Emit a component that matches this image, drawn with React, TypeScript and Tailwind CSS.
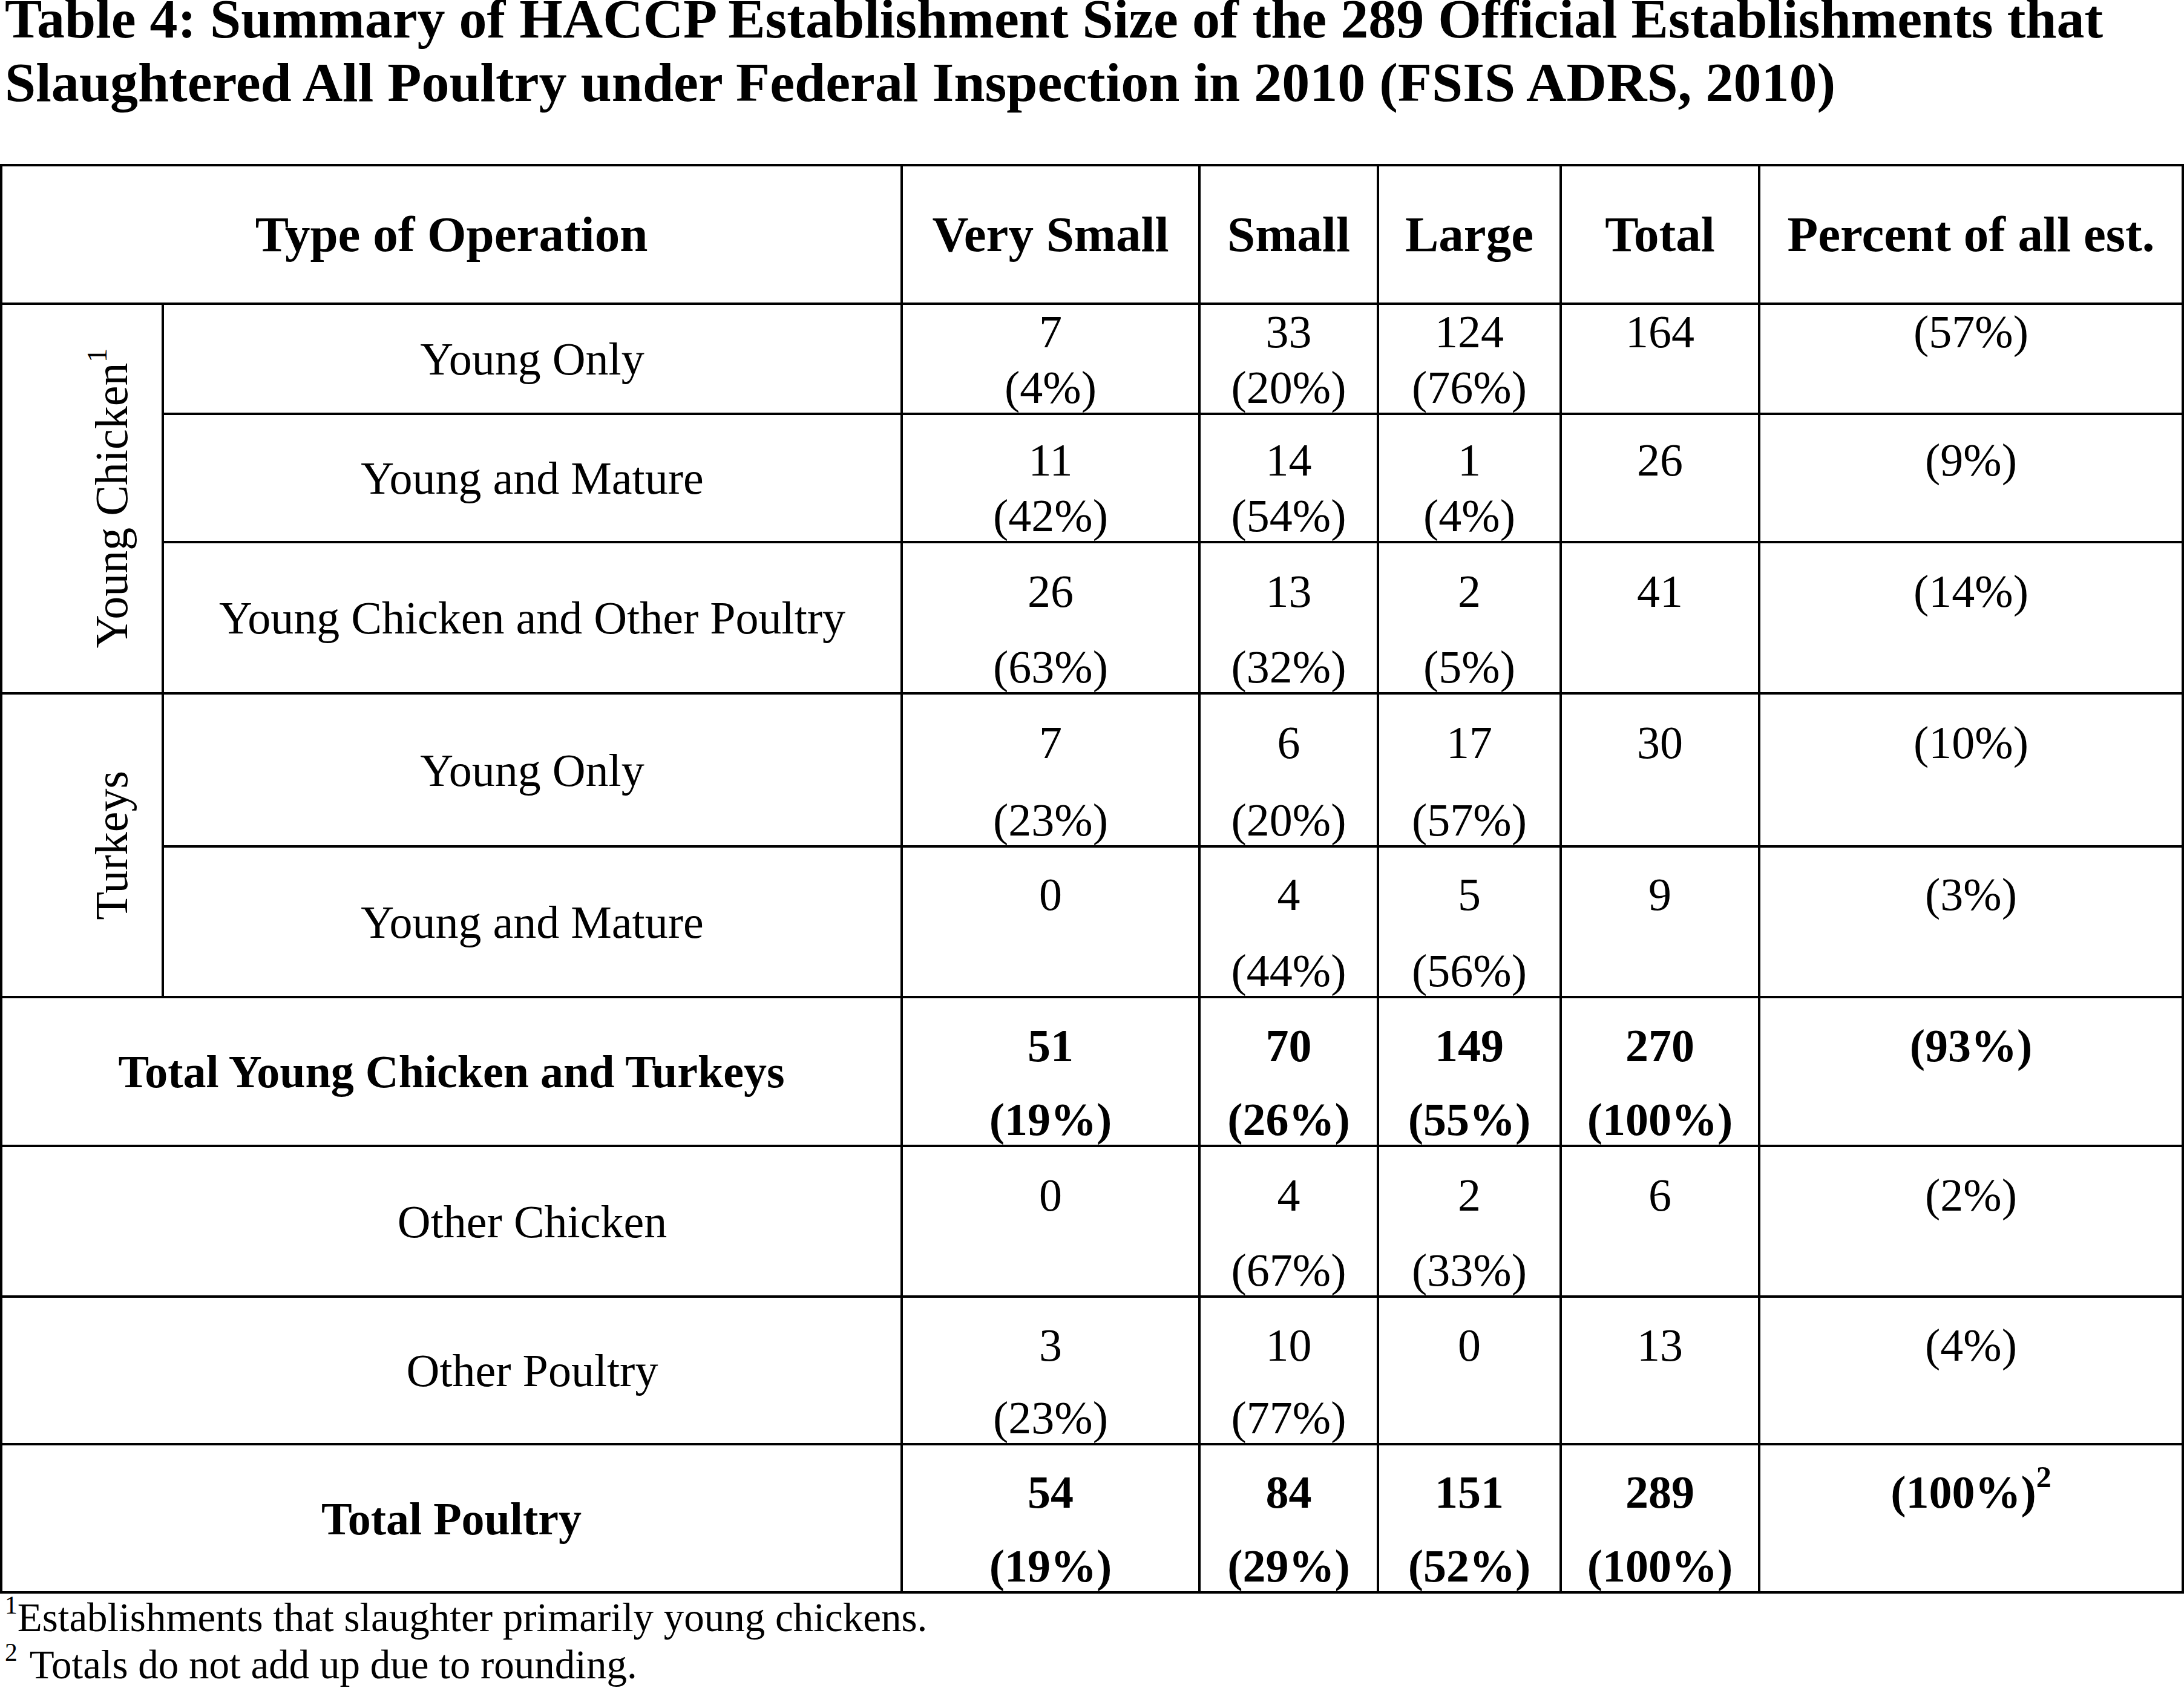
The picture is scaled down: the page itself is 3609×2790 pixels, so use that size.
import React from "react";

type Row = {
  label: string;
  kind: "inner" | "total" | "offset";
  h: string;
  pt: string;
  gap: string;
  vs: string[];
  s: string[];
  l: string[];
  t: string[];
  p: React.ReactNode;
  group?: { name: string; sup?: string; rows: number };
};

const rows: Row[] = [
  {
    label: "Young Only",
    kind: "inner",
    h: "h-[182px]",
    pt: "pt-[2px]",
    gap: "mt-[8px]",
    vs: ["7", "(4%)"],
    s: ["33", "(20%)"],
    l: ["124", "(76%)"],
    t: ["164"],
    p: "(57%)",
    group: { name: "Young Chicken", sup: "1", rows: 3 },
  },
  {
    label: "Young and Mature",
    kind: "inner",
    h: "h-[212px]",
    pt: "pt-[32px]",
    gap: "mt-[8px]",
    vs: ["11", "(42%)"],
    s: ["14", "(54%)"],
    l: ["1", "(4%)"],
    t: ["26"],
    p: "(9%)",
  },
  {
    label: "Young Chicken and Other Poultry",
    kind: "inner",
    h: "h-[250px]",
    pt: "pt-[37px]",
    gap: "mt-[41px]",
    vs: ["26", "(63%)"],
    s: ["13", "(32%)"],
    l: ["2", "(5%)"],
    t: ["41"],
    p: "(14%)",
  },
  {
    label: "Young Only",
    kind: "inner",
    h: "h-[253px]",
    pt: "pt-[37px]",
    gap: "mt-[44px]",
    vs: ["7", "(23%)"],
    s: ["6", "(20%)"],
    l: ["17", "(57%)"],
    t: ["30"],
    p: "(10%)",
    group: { name: "Turkeys", rows: 2 },
  },
  {
    label: "Young and Mature",
    kind: "inner",
    h: "h-[249px]",
    pt: "pt-[35px]",
    gap: "mt-[42px]",
    vs: ["0"],
    s: ["4", "(44%)"],
    l: ["5", "(56%)"],
    t: ["9"],
    p: "(3%)",
  },
  {
    label: "Total Young Chicken and Turkeys",
    kind: "total",
    h: "h-[246px]",
    pt: "pt-[36px]",
    gap: "mt-[38px]",
    vs: ["51", "(19%)"],
    s: ["70", "(26%)"],
    l: ["149", "(55%)"],
    t: ["270", "(100%)"],
    p: "(93%)",
  },
  {
    label: "Other Chicken",
    kind: "offset",
    h: "h-[249px]",
    pt: "pt-[37px]",
    gap: "mt-[40px]",
    vs: ["0"],
    s: ["4", "(67%)"],
    l: ["2", "(33%)"],
    t: ["6"],
    p: "(2%)",
  },
  {
    label: "Other Poultry",
    kind: "offset",
    h: "h-[244px]",
    pt: "pt-[36px]",
    gap: "mt-[36px]",
    vs: ["3", "(23%)"],
    s: ["10", "(77%)"],
    l: ["0"],
    t: ["13"],
    p: "(4%)",
  },
  {
    label: "Total Poultry",
    kind: "total",
    h: "h-[245px]",
    pt: "pt-[35px]",
    gap: "mt-[38px]",
    vs: ["54", "(19%)"],
    s: ["84", "(29%)"],
    l: ["151", "(52%)"],
    t: ["289", "(100%)"],
    p: (
      <>
        (100%)<sup className="text-[0.66em] top-[-0.68em]">2</sup>
      </>
    ),
  },
];

const cell = "border-4 border-black p-0";

function NumCell({ lines, row }: { lines: React.ReactNode[]; row: Row }) {
  return (
    <td className={`${cell} align-top text-center`}>
      <div className={row.pt}>
        {lines.map((x, i) => (
          <div key={i} className={`leading-[84px] ${i > 0 ? row.gap : ""}`}>
            {x}
          </div>
        ))}
      </div>
    </td>
  );
}

export default function App() {
  return (
    <div className="min-h-screen w-[3609px] overflow-hidden bg-white text-black font-['Liberation_Serif','Times_New_Roman',serif]">
      <h1 className="-mt-[21px] pl-[8px] text-[92px] font-bold leading-[105px] whitespace-nowrap">
        Table 4: Summary of HACCP Establishment Size of the 289 Official Establishments that
        <br />
        Slaughtered All Poultry under Federal Inspection in 2010 (FSIS ADRS, 2010)
      </h1>

      <table className="mt-[82px] w-[3609px] table-fixed border-collapse text-[76px] whitespace-nowrap">
        <colgroup>
          <col className="w-[267px]" />
          <col className="w-[1221px]" />
          <col className="w-[492px]" />
          <col className="w-[295px]" />
          <col className="w-[302px]" />
          <col className="w-[328px]" />
          <col className="w-[700px]" />
        </colgroup>
        <thead>
          <tr className="h-[229px] text-[83px] font-bold">
            <th colSpan={2} className={`${cell} align-middle text-center`}>
              Type of Operation
            </th>
            <th className={`${cell} align-middle text-center`}>Very Small</th>
            <th className={`${cell} align-middle text-center`}>Small</th>
            <th className={`${cell} align-middle text-center`}>Large</th>
            <th className={`${cell} align-middle text-center`}>Total</th>
            <th className={`${cell} align-middle text-center`}>Percent of all est.</th>
          </tr>
        </thead>
        <tbody>
          {rows.map((row, i) => (
            <tr key={i} className={`${row.h} ${row.kind === "total" ? "font-bold" : ""}`}>
              {row.group && (
                <td rowSpan={row.group.rows} className={`${cell} align-middle`}>
                  <div className="flex justify-end pr-[40px]">
                    <span className="rotate-180 leading-[86px] [writing-mode:vertical-rl]">
                      {row.group.name}
                      {row.group.sup && (
                        <sup className="top-0 text-[0.62em] align-[0.5em]">{row.group.sup}</sup>
                      )}
                    </span>
                  </div>
                </td>
              )}
              {row.kind === "inner" && (
                <td className={`${cell} align-middle text-center leading-[84px]`}>{row.label}</td>
              )}
              {row.kind === "total" && (
                <td colSpan={2} className={`${cell} align-middle text-center leading-[84px]`}>
                  {row.label}
                </td>
              )}
              {row.kind === "offset" && (
                <td colSpan={2} className={`${cell} align-middle text-center leading-[84px]`}>
                  <div className="pl-[267px]">{row.label}</div>
                </td>
              )}
              <NumCell lines={row.vs} row={row} />
              <NumCell lines={row.s} row={row} />
              <NumCell lines={row.l} row={row} />
              <NumCell lines={row.t} row={row} />
              <NumCell lines={[row.p]} row={row} />
            </tr>
          ))}
        </tbody>
      </table>

      <div className="pl-[8px] text-[67px] leading-[78px] whitespace-nowrap">
        <p>
          <sup className="text-[0.62em] top-[-0.7em]">1</sup>Establishments that slaughter primarily young chickens.
        </p>
        <p>
          <sup className="text-[0.62em] top-[-0.7em]">2</sup>
          <span className="pl-[20px]">Totals do not add up due to rounding.</span>
        </p>
      </div>
    </div>
  );
}
